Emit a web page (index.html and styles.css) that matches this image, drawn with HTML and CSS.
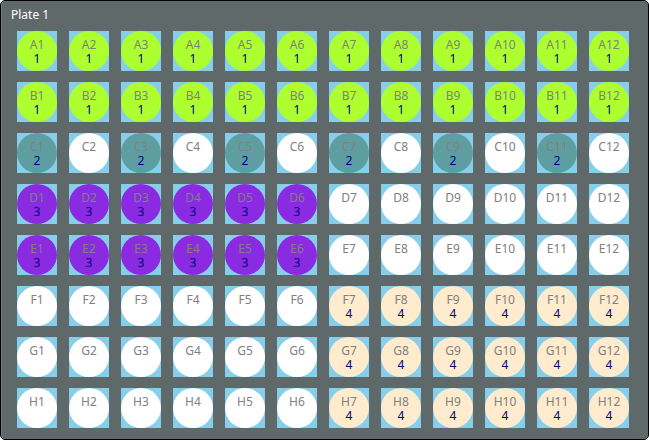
FILE: index.html
```html
<!DOCTYPE html>
<html lang="en">
<head>
<meta charset="utf-8">
<title>Plate 1</title>
<link rel="stylesheet" href="styles.css">
</head>
<body>
<section class="plate" aria-labelledby="plate-title">
  <h1 class="plate-title" id="plate-title">Plate 1</h1>
  <div class="wells" id="wells"></div>
</section>
<script src="plate.js"></script>
</body>
</html>
```
FILE: styles.css
```css
* {
  box-sizing: border-box;
}

body {
  margin: 0;
  background: #fff;
  font-family: "Segoe UI", "Noto Sans", "Open Sans", sans-serif;
  font-size: 12px;
  line-height: 14px;
}

.plate {
  padding: 7px 19px 11px 16px;
  border: 1px solid #000;
  border-radius: 5px;
  background: #5f6969;
  box-shadow: inset 1px 0 #747c7c;
}

.plate-title {
  margin: 0 0 9px -6px;
  color: #fff;
  font-size: 12px;
  font-weight: 400;
  line-height: 14px;
}

.wells {
  display: grid;
  grid-template-columns: repeat(12, 40px);
  justify-content: space-between;
  row-gap: 11px;
}

.well {
  height: 40px;
  background: #87ceeb;
}

.well-disc {
  display: flex;
  flex-direction: column;
  align-items: center;
  height: 40px;
  padding-top: 7px;
  border-radius: 50%;
  background: #fff;
}

.well-name {
  color: #808080;
}

.well-group {
  color: #000080;
}

.group-1 {
  background: #adff2f;
}

.group-2 {
  background: #5f9ea0;
}

.group-3 {
  background: #8a2be2;
}

.group-4 {
  background: #ffebcd;
}
```
FILE: plate.js
```js
// Sample group of each well, one string per plate row; "." is an empty well.
const layout = {
  A: "111111111111",
  B: "111111111111",
  C: "2.2.2.2.2.2.",
  D: "333333......",
  E: "333333......",
  F: "......444444",
  G: "......444444",
  H: "......444444"
};

function addLabel(parent, className, text) {
  const label = document.createElement("span");
  label.className = className;
  label.textContent = text;
  parent.append(label);
}

const wells = document.getElementById("wells");
for (const [row, groups] of Object.entries(layout)) {
  [...groups].forEach((group, index) => {
    const well = document.createElement("div");
    const disc = document.createElement("div");
    well.className = "well";
    disc.className = "well-disc";
    addLabel(disc, "well-name", row + (index + 1));
    if (group !== ".") {
      disc.classList.add("group-" + group);
      addLabel(disc, "well-group", group);
    }
    well.append(disc);
    wells.append(well);
  });
}
```
